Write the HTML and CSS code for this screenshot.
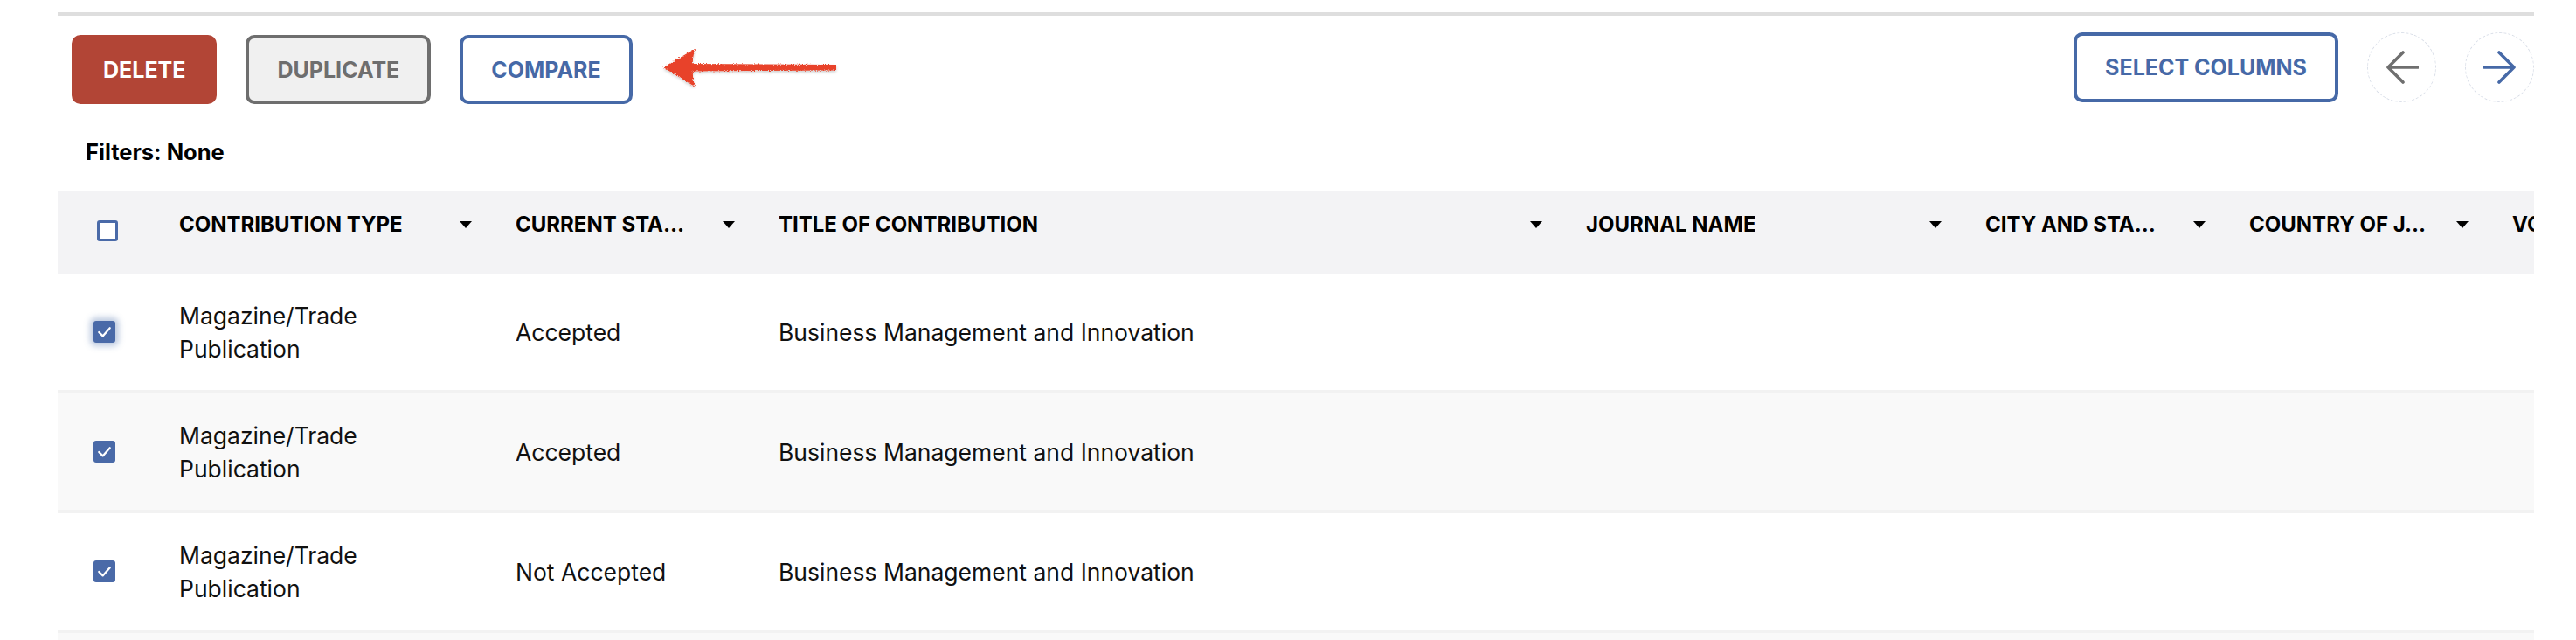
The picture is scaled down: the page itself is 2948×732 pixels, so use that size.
FILE: index.html
```html
<!DOCTYPE html>
<html lang="en">
<head>
<meta charset="utf-8">
<title>Contributions</title>
<link rel="stylesheet" href="styles.css">
</head>
<body>
<div class="page">
  <div class="rule"></div>
  <div class="toolbar">
    <div class="actions">
      <button class="btn btn-delete">DELETE</button>
      <button class="btn btn-duplicate">DUPLICATE</button>
      <button class="btn btn-outline">COMPARE</button>
      <svg class="annot" width="204" height="48" viewBox="0 0 204 48" aria-hidden="true">
        <defs>
          <filter id="rough" x="-5%" y="-20%" width="110%" height="150%">
            <feTurbulence type="fractalNoise" baseFrequency="0.8" numOctaves="2" result="noise"/>
            <feDisplacementMap in="SourceGraphic" in2="noise" scale="3.5" xChannelSelector="R" yChannelSelector="G" result="d"/>
            <feDropShadow dx="0" dy="2" stdDeviation="1.5" flood-color="#000" flood-opacity="0.18"/>
          </filter>
        </defs>
        <g filter="url(#rough)" fill="#e8432a">
          <path d="M2 23 L38 2 Q33 23 38 45 Z"/>
          <path d="M34 19 L200 20 L200 26.5 L34 27.5 Z"/>
        </g>
      </svg>
    </div>
    <div class="nav">
      <button class="btn btn-outline">SELECT COLUMNS</button>
      <button class="circle prev" aria-label="Previous">
        <svg width="38" height="38" viewBox="0 0 38 38"><path d="M37 19H3M20 2L3 19l17 17" fill="none" stroke="currentColor" stroke-width="3.6" stroke-linecap="round" stroke-linejoin="round"/></svg>
      </button>
      <button class="circle next" aria-label="Next">
        <svg width="38" height="38" viewBox="0 0 38 38"><path d="M1 19h34M18 2l17 17-17 17" fill="none" stroke="currentColor" stroke-width="3.6" stroke-linecap="round" stroke-linejoin="round"/></svg>
      </button>
    </div>
  </div>

  <div class="filters">Filters: None</div>

  <div class="table">
    <div class="row head">
      <div class="cell check"><span class="box"></span></div>
      <div class="cell"><span class="label">CONTRIBUTION TYPE</span><span class="caret"></span></div>
      <div class="cell"><span class="label">CURRENT STA…</span><span class="caret"></span></div>
      <div class="cell"><span class="label">TITLE OF CONTRIBUTION</span><span class="caret"></span></div>
      <div class="cell"><span class="label">JOURNAL NAME</span><span class="caret"></span></div>
      <div class="cell"><span class="label">CITY AND STA…</span><span class="caret"></span></div>
      <div class="cell"><span class="label">COUNTRY OF J…</span><span class="caret"></span></div>
      <div class="cell"><span class="label">VOLUME</span><span class="caret"></span></div>
    </div>

    <div class="row">
      <div class="cell check"><span class="box checked focus"><svg viewBox="0 0 24 24"><path d="M6 12.5l4.2 4.2L18 8" fill="none" stroke="#fff" stroke-width="2.2" stroke-linecap="round" stroke-linejoin="round"/></svg></span></div>
      <div class="cell">Magazine/Trade<br>Publication</div>
      <div class="cell">Accepted</div>
      <div class="cell">Business Management and Innovation</div>
      <div class="cell"></div>
      <div class="cell"></div>
      <div class="cell"></div>
      <div class="cell"></div>
    </div>

    <div class="row alt">
      <div class="cell check"><span class="box checked"><svg viewBox="0 0 24 24"><path d="M6 12.5l4.2 4.2L18 8" fill="none" stroke="#fff" stroke-width="2.2" stroke-linecap="round" stroke-linejoin="round"/></svg></span></div>
      <div class="cell">Magazine/Trade<br>Publication</div>
      <div class="cell">Accepted</div>
      <div class="cell">Business Management and Innovation</div>
      <div class="cell"></div>
      <div class="cell"></div>
      <div class="cell"></div>
      <div class="cell"></div>
    </div>

    <div class="row">
      <div class="cell check"><span class="box checked"><svg viewBox="0 0 24 24"><path d="M6 12.5l4.2 4.2L18 8" fill="none" stroke="#fff" stroke-width="2.2" stroke-linecap="round" stroke-linejoin="round"/></svg></span></div>
      <div class="cell">Magazine/Trade<br>Publication</div>
      <div class="cell">Not Accepted</div>
      <div class="cell">Business Management and Innovation</div>
      <div class="cell"></div>
      <div class="cell"></div>
      <div class="cell"></div>
      <div class="cell"></div>
    </div>

    <div class="row alt">
      <div class="cell check"></div>
      <div class="cell"></div>
      <div class="cell"></div>
      <div class="cell"></div>
      <div class="cell"></div>
      <div class="cell"></div>
      <div class="cell"></div>
      <div class="cell"></div>
    </div>
  </div>
</div>
</body>
</html>
```

FILE: styles.css
```css
html, body {
  margin: 0;
  padding: 0;
  background: #ffffff;
  overflow: hidden;
}

body {
  font-family: "Inter", "Liberation Sans", sans-serif;
  color: #111111;
}

.page {
  box-sizing: border-box;
  width: 2900px;
  height: 732px;
  padding: 14px 0 0 66px;
  overflow: hidden;
}

.rule {
  height: 4px;
  background: #dedede;
}

.toolbar {
  display: flex;
  justify-content: space-between;
  align-items: flex-start;
  margin-top: 19px;
}

.actions {
  display: flex;
  align-items: center;
  gap: 33px;
  margin-top: 3px;
  padding-left: 16px;
}

.nav {
  display: flex;
  align-items: center;
  gap: 33px;
}

.btn {
  box-sizing: border-box;
  height: 79px;
  padding: 0 32px;
  border: 4px solid transparent;
  border-radius: 10px;
  font-family: "Inter", "Liberation Sans", sans-serif;
  font-size: 25px;
  font-weight: 700;
  letter-spacing: 0;
  background: #ffffff;
  cursor: pointer;
}

.btn-delete {
  background: #b24536;
  border-color: #b24536;
  color: #ffffff;
}

.btn-duplicate {
  background: #f0f0f0;
  border-color: #6e6e6e;
  color: #6e6e6e;
}

.btn-outline {
  border-color: #4669a7;
  color: #4669a7;
}

.nav .btn {
  height: 80px;
}

.annot {
  display: block;
  margin-top: -4px;
}

.circle {
  box-sizing: border-box;
  width: 79px;
  height: 80px;
  padding: 0;
  border: 1px dashed #d9dee8;
  border-radius: 50%;
  background: #ffffff;
  display: flex;
  align-items: center;
  justify-content: center;
  cursor: pointer;
}

.circle svg {
  display: block;
}

.circle.prev {
  color: #6f6f6f;
}

.circle.next {
  color: #4669a7;
}

.filters {
  margin-top: 40px;
  padding-left: 32px;
  font-size: 25.5px;
  line-height: 29px;
  font-weight: 700;
  color: #000000;
}

.table {
  margin-top: 31px;
  width: 2834px;
  overflow: hidden;
}

.row {
  display: grid;
  grid-template-columns: 115px 385px 301px 924px 457px 302px 301px 301px;
  width: 3086px;
  height: 133px;
  border-bottom: 4px solid #f2f2f2;
  background: #ffffff;
}

.row.alt {
  background: #f9f9f9;
}

.row.head {
  height: 94px;
  border-bottom: 0;
  background: #f3f3f5;
}

.cell {
  display: flex;
  align-items: center;
  padding: 0 26px 0 24px;
  font-size: 26.5px;
  line-height: 38px;
  color: #111111;
  white-space: nowrap;
}

.head .cell {
  align-items: flex-start;
  justify-content: space-between;
  padding-top: 23px;
  font-size: 24px;
  line-height: 29px;
  font-weight: 700;
  color: #000000;
}

.cell.check {
  padding: 0 0 0 41px;
}

.head .cell.check {
  padding: 33px 0 0 45px;
}

.caret {
  width: 0;
  height: 0;
  margin-top: 11px;
  border-left: 7.5px solid transparent;
  border-right: 7.5px solid transparent;
  border-top: 8px solid #000000;
}

.box {
  box-sizing: border-box;
  display: block;
  width: 24px;
  height: 24px;
  border: 3px solid #4a6aa8;
  border-radius: 3px;
  background: #ffffff;
}

.box.checked {
  width: 25px;
  height: 25px;
  border: 0;
  background: #4a6aa8;
}

.box.checked svg {
  display: block;
  width: 25px;
  height: 25px;
}

.box.focus {
  box-shadow: 0 0 7px 4px rgba(70, 105, 167, 0.35);
}
```
